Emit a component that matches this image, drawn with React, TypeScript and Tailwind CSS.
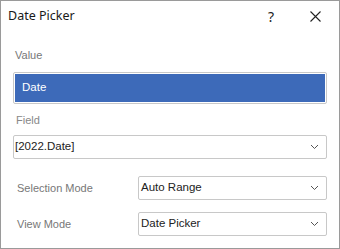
import React from "react";

const Chevron = () => (
  <svg width="9" height="6" viewBox="0 0 9 6" className="shrink-0">
    <path d="M1 1 L4.5 4.5 L8 1" fill="none" stroke="#555" strokeWidth="1" />
  </svg>
);

const Select = ({ text, className = "" }: { text: string; className?: string }) => (
  <div
    className={`flex items-center justify-between h-[24px] border border-[#c8c8c8] rounded-[2px] bg-white pr-[7px] ${className}`}
  >
    <span className="text-[11.5px] text-[#222]">{text}</span>
    <Chevron />
  </div>
);

export default function App() {
  return (
    <div
      className="w-[340px] h-[249px] bg-white border border-[#9a9a9a] flex flex-col"
      style={{ fontFamily: "'Liberation Sans', Arial, sans-serif" }}
    >
      <div className="h-[30px] flex items-center pl-[7px] shrink-0">
        <span
          className="text-[12.5px] text-[#1a1a1a] flex-1"
          style={{ fontFamily: "'Noto Sans', 'Open Sans', sans-serif" }}
        >
          Date Picker
        </span>
        <span
          className="text-[14px] text-[#222] w-[12px] mr-[30px]"
          style={{ fontFamily: "'Noto Sans', 'Open Sans', sans-serif" }}
        >
          ?
        </span>
        <svg width="11" height="11" viewBox="0 0 11 11" className="mr-[18px]">
          <path d="M0.5 0.5 L10.5 10.5 M10.5 0.5 L0.5 10.5" stroke="#222" strokeWidth="1.1" />
        </svg>
      </div>
      <div className="flex flex-col pl-[12px] pr-[12px] pt-[18px]">
        <div className="text-[11px] text-[#777] pl-[2px] leading-[13px]">Value</div>
        <div className="mt-[10px] h-[32px] border border-[#c8c8c8] rounded-[2px] p-[1px]">
          <div className="h-full bg-[#3d6ab9] flex items-center pl-[7px]">
            <span className="text-[11.5px] text-white">Date</span>
          </div>
        </div>
        <div className="mt-[10px] text-[11px] text-[#888] pl-[3px] leading-[13px]">Field</div>
        <Select text="[2022.Date]" className="mt-[8px] pl-[1px]" />
        <div className="mt-[17px] flex items-center">
          <span className="w-[125px] pl-[4px] text-[11px] text-[#777]">Selection Mode</span>
          <Select text="Auto Range" className="flex-1 pl-[2px]" />
        </div>
        <div className="mt-[12px] flex items-center">
          <span className="w-[125px] pl-[4px] text-[11px] text-[#777]">View Mode</span>
          <Select text="Date Picker" className="flex-1 pl-[2px]" />
        </div>
      </div>
    </div>
  );
}
